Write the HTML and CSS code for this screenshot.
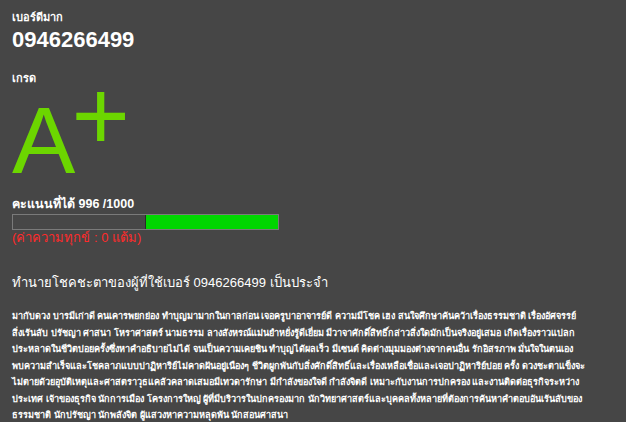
FILE: index.html
```html
<!DOCTYPE html>
<html lang="th">
<head>
<meta charset="utf-8">
<title>เบอร์ดีมาก</title>
<link rel="stylesheet" href="styles.css">
</head>
<body>
<div class="page">
  <section class="info">
    <div class="label">เบอร์ดีมาก</div>
    <div class="phone">0946266499</div>
    <div class="label grade-label">เกรด</div>
    <div class="grade">A<span class="plus">+</span></div>
    <div class="score-label">คะแนนที่ได้ 996 /1000</div>
    <div class="bar"><div class="fill" style="width:50%"></div></div>
    <div class="pain">(ค่าความทุกข์ : 0 แต้ม)</div>
  </section>
  <h2 class="title">ทำนายโชคชะตาของผู้ที่ใช้เบอร์ 0946266499 เป็นประจำ</h2>
  <p class="desc">มากับดวง บารมีเก่าดี คนเคารพยกย่อง ทำบุญมามากในกาลก่อน เจอครูบาอาจารย์ดี ความมีโชค เฮง สนใจศึกษาค้นคว้าเรื่องธรรมชาติ เรื่องอัศจรรย์<br>สิ่งเร้นลับ ปรัชญา ศาสนา โหราศาสตร์ นามธรรม ลางสังหรณ์แม่นยำหยั่งรู้ดีเยี่ยม มีวาจาศักดิ์สิทธิ์กล่าวสิ่งใดมักเป็นจริงอยู่เสมอ เกิดเรื่องราวแปลก<br>ประหลาดในชีวิตบ่อยครั้งซึ่งหาคำอธิบายไม่ได้ จนเป็นความเคยชิน ทำบุญได้ผลเร็ว มีเซนต์ คิดต่างมุมมองต่างจากคนอื่น รักอิสรภาพ มั่นใจในตนเอง<br>พบความสำเร็จและโชคลาภแบบปาฏิหาริย์ไม่คาดฝันอยู่เนืองๆ ชีวิตผูกพันกับสิ่งศักดิ์สิทธิ์และเรื่องเหลือเชื่อและเจอปาฏิหาริย์บ่อย ครั้ง ดวงชะตาแข็งจะ<br>ไม่ตายด้วยอุบัติเหตุและศาสตราวุธแคล้วคลาดเสมอมีเทวดารักษา มีกำลังของใจดี กำลังจิตดี เหมาะกับงานการปกครอง และงานติดต่อธุรกิจระหว่าง<br>ประเทศ เจ้าของธุรกิจ นักการเมือง โครงการใหญ่ ผู้ที่มีบริวารในปกครองมาก นักวิทยาศาสตร์และบุคคลทั้งหลายที่ต้องการค้นหาคำตอบอันเร้นลับของ<br>ธรรมชาติ นักปรัชญา นักพลังจิต ผู้แสวงหาความหลุดพ้น นักสอนศาสนา<br>โดยเฉพาะผู้ที่ใช้เบอร์นี้เป็นประจำจะพบแต่สิ่งดีๆ ในชีวิต</p>
</div>
</body>
</html>
```

FILE: styles.css
```css
html, body {
  margin: 0;
  padding: 0;
  background: #464646;
  color: #ffffff;
  font-family: "Liberation Sans", "Noto Sans", sans-serif;
}

.page {
  padding: 10px 12px 0 12px;
  height: 422px;
  box-sizing: border-box;
  overflow: hidden;
}

.info {
  display: flex;
  flex-direction: column;
  align-items: flex-start;
}

.label {
  font-size: 11px;
  font-weight: bold;
  line-height: 14px;
}

.phone {
  font-size: 22px;
  font-weight: bold;
  line-height: 26px;
  margin-top: 3px;
  margin-bottom: 1px;
}

.grade-label {
  margin-top: 17px;
}

.grade {
  color: #6cd600;
  font-size: 95px;
  line-height: 96px;
  margin-top: 5px;
}

.plus {
  position: relative;
  top: -23px;
  margin-left: -4px;
  font-size: 100px;
}

.score-label {
  font-size: 12.5px;
  font-weight: bold;
  line-height: 16px;
  margin-top: 8px;
}

.bar {
  width: 265px;
  height: 14px;
  border: 1px solid #7a7a7a;
  background: #474747;
  display: flex;
  justify-content: flex-end;
  margin-top: 2px;
}

.fill {
  background: #00d600;
  border-left: 1px solid #2a2a2a;
}

.pain {
  color: #ff2a2a;
  font-size: 13px;
  line-height: 16px;
}

.title {
  font-size: 13px;
  font-weight: normal;
  line-height: 22px;
  margin: 26px 0 0 0;
}

.desc {
  font-size: 9.1px;
  font-weight: bold;
  line-height: 16.5px;
  white-space: nowrap;
  margin: 14px 0 0 0;
}
```
